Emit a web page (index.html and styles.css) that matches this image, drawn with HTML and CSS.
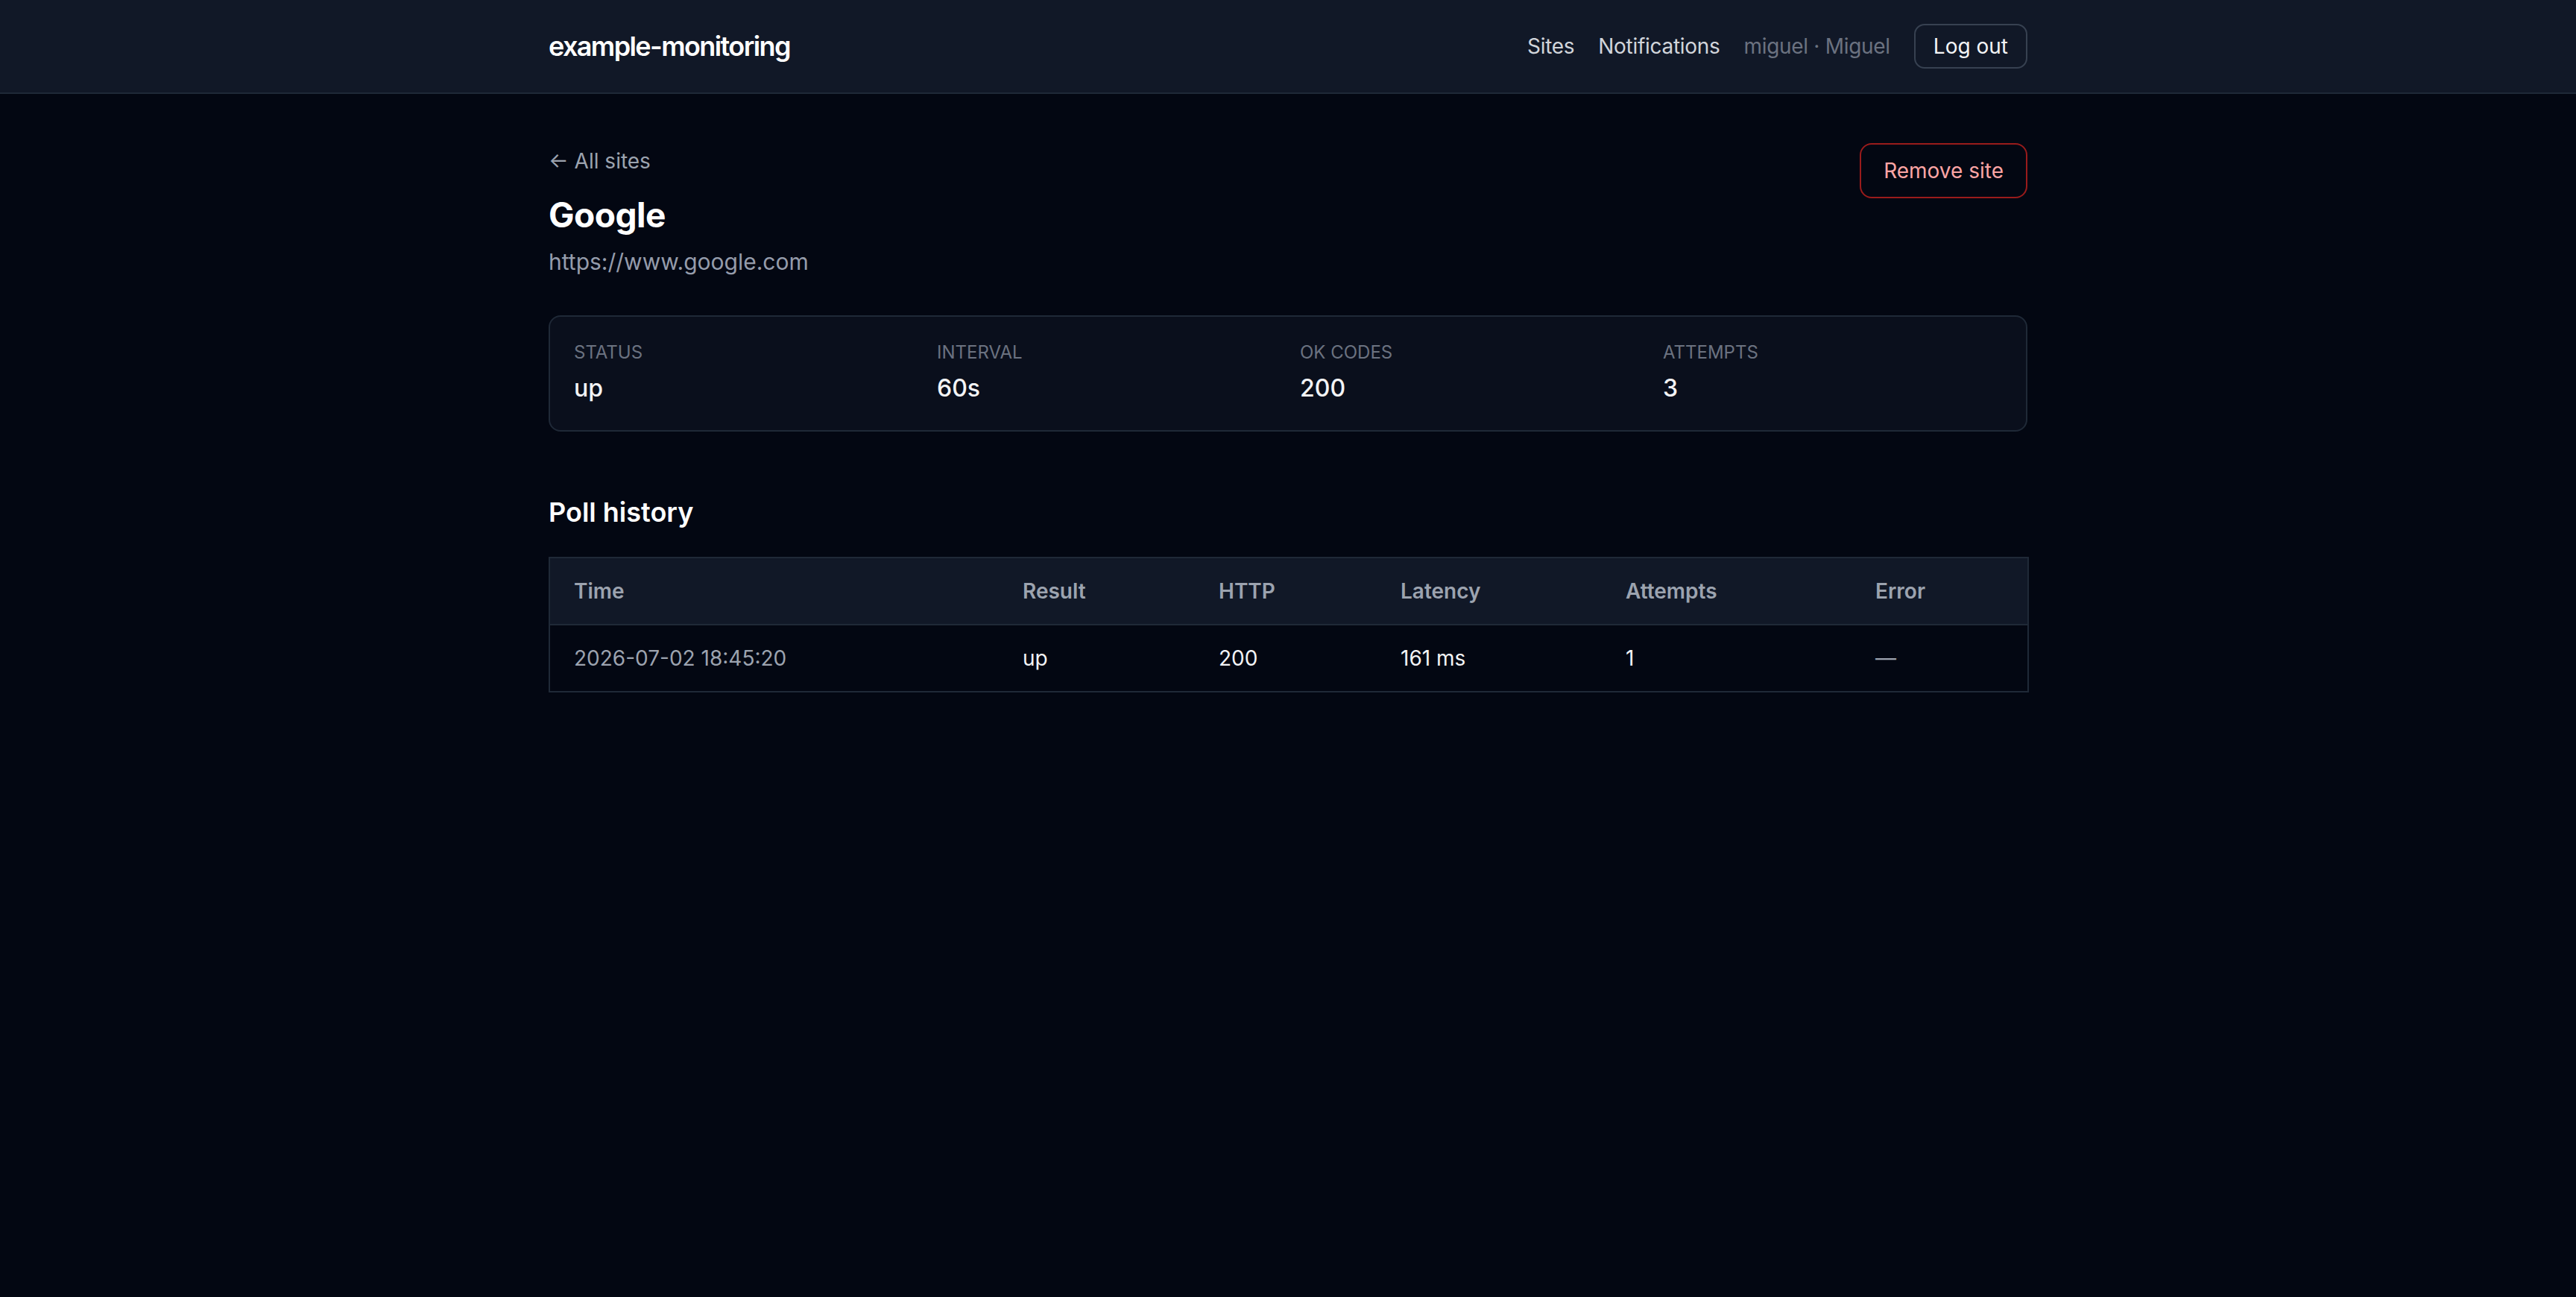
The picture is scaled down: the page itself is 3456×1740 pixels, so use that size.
FILE: index.html
```html
<!DOCTYPE html>
<html lang="en">
<head>
  <meta charset="UTF-8" />
  <meta name="viewport" content="width=device-width, initial-scale=1.0"/>
  <title>Google · example-monitoring</title>
  <link rel="stylesheet" href="styles.css">
</head>
<body>
  <header class="topbar">
    <div class="topbar-inner">
      <a class="brand" href="#">example-monitoring</a>
      <nav class="topnav">
        <a href="#">Sites</a>
        <a href="#">Notifications</a>
        <span class="user">miguel · Miguel</span>
        <button class="btn btn-outline">Log out</button>
      </nav>
    </div>
  </header>

  <main class="page">
    <div class="site-head">
      <div>
        <a class="back" href="#">← All sites</a>
        <h1 class="site-name">Google</h1>
        <p class="site-url">https://www.google.com</p>
      </div>
      <button class="btn btn-danger">Remove site</button>
    </div>

    <div class="stats">
      <div class="stat">
        <div class="stat-label">Status</div>
        <div class="stat-value">up</div>
      </div>
      <div class="stat">
        <div class="stat-label">Interval</div>
        <div class="stat-value">60s</div>
      </div>
      <div class="stat">
        <div class="stat-label">OK codes</div>
        <div class="stat-value">200</div>
      </div>
      <div class="stat">
        <div class="stat-label">Attempts</div>
        <div class="stat-value">3</div>
      </div>
    </div>

    <h2 class="section-title">Poll history</h2>

    <table class="polls">
      <thead>
        <tr>
          <th class="col-time">Time</th>
          <th class="col-result">Result</th>
          <th class="col-http">HTTP</th>
          <th class="col-latency">Latency</th>
          <th class="col-attempts">Attempts</th>
          <th class="col-error">Error</th>
        </tr>
      </thead>
      <tbody>
        <tr>
          <td class="muted">2026-07-02 18:45:20</td>
          <td>up</td>
          <td>200</td>
          <td>161 ms</td>
          <td>1</td>
          <td class="muted">—</td>
        </tr>
      </tbody>
    </table>
  </main>
</body>
</html>
```

FILE: styles.css
```css
* {
  box-sizing: border-box;
}

body {
  margin: 0;
  font-family: "Inter", "Noto Sans", sans-serif;
  background-color: #030712;
  color: #f3f4f6;
}

a {
  color: inherit;
  text-decoration: none;
}

/* top bar */
.topbar {
  background-color: #111827;
  border-bottom: 2px solid #1f2937;
}

.topbar-inner {
  max-width: 2048px;
  margin: 0 auto;
  padding: 32px;
  display: flex;
  align-items: center;
  justify-content: space-between;
}

.brand {
  font-size: 36px;
  line-height: 56px;
  font-weight: 600;
  letter-spacing: -1.6px;
  color: #ffffff;
}

.topnav {
  display: flex;
  align-items: center;
  gap: 32px;
  font-size: 28px;
  line-height: 40px;
  letter-spacing: -0.3px;
}

.topnav a {
  color: #d1d5db;
}

.topnav .user {
  color: #6b7280;
}

.btn {
  font-family: inherit;
  font-size: 28px;
  line-height: 40px;
  background: transparent;
  cursor: pointer;
}

.btn-outline {
  padding: 8px 24px;
  border: 2px solid #374151;
  border-radius: 14px;
  color: #f3f4f6;
}

.btn-danger {
  padding: 15px 30px;
  border: 2px solid #991b1b;
  border-radius: 16px;
  color: #fca5a5;
}

/* page */
.page {
  max-width: 2048px;
  margin: 0 auto;
  padding: 66px 32px;
}

.site-head {
  display: flex;
  align-items: flex-start;
  justify-content: space-between;
}

.back {
  display: block;
  font-size: 28px;
  line-height: 48px;
  color: #9ca3af;
}

.site-name {
  margin: 16px 0 0;
  font-size: 46px;
  line-height: 64px;
  font-weight: 700;
  letter-spacing: -0.5px;
  color: #ffffff;
}

.site-url {
  margin: 7px 0 0;
  font-size: 30px;
  line-height: 48px;
  color: #959cab;
}

.stats {
  margin-top: 48px;
  display: grid;
  grid-template-columns: repeat(4, 1fr);
  gap: 32px;
  padding: 32px;
  background-color: #0a0f1c;
  border: 2px solid #1f2937;
  border-radius: 16px;
}

.stat-label {
  font-size: 24px;
  line-height: 32px;
  text-transform: uppercase;
  color: #6b7280;
}

.stat-value {
  margin-top: 8px;
  font-size: 32px;
  line-height: 48px;
  font-weight: 500;
  color: #f3f4f6;
}

.section-title {
  margin: 80px 0 32px;
  font-size: 36px;
  line-height: 56px;
  font-weight: 600;
  color: #ffffff;
}

/* poll table */
.polls {
  width: 100%;
  table-layout: fixed;
  border-collapse: collapse;
  border: 2px solid #1f2937;
  font-size: 28px;
  line-height: 40px;
}

.polls th,
.polls td {
  padding: 24px 32px;
  text-align: left;
}

.polls th {
  background-color: #111827;
  border-bottom: 2px solid #1f2937;
  font-weight: 600;
  color: #9ca3af;
}

.polls td {
  color: #f3f4f6;
}

.polls td.muted {
  color: #9ca3af;
}

.col-time { width: 603px; }
.col-result { width: 263px; }
.col-http { width: 244px; }
.col-latency { width: 302px; }
.col-attempts { width: 335px; }
.col-error { width: 237px; }
```
